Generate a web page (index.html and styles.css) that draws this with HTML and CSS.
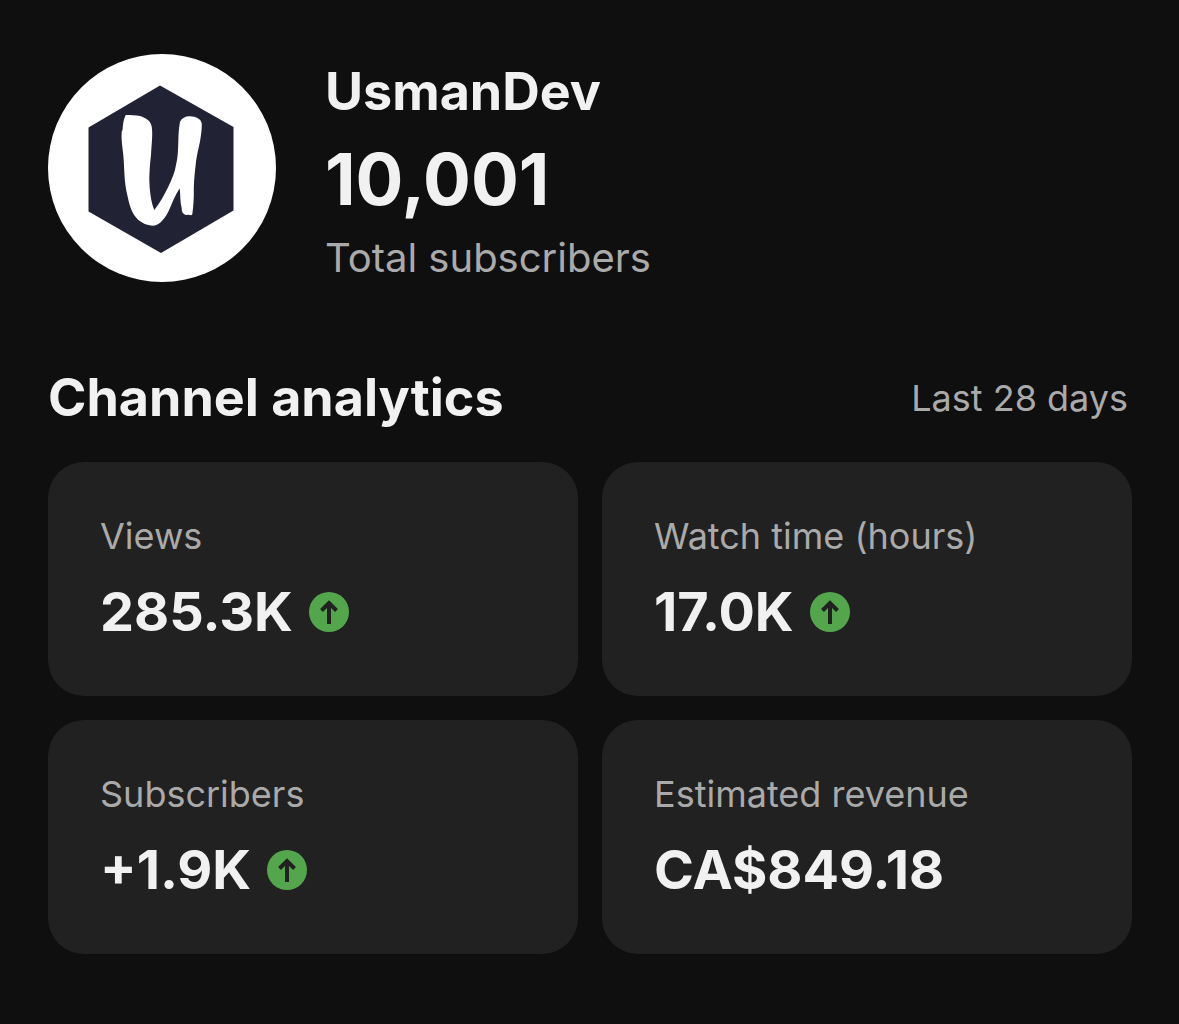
FILE: index.html
```html
<!DOCTYPE html>
<html lang="en">
<head>
<meta charset="UTF-8">
<title>Channel analytics</title>
<meta name="viewport" content="width=device-width, initial-scale=1.0">

<link rel="stylesheet" href="styles.css">
</head>

<body>

<!-- CHANNEL -->
<header class="channel">
  <svg class="avatar" viewBox="0 0 228 228" role="img" aria-label="UsmanDev">
    <circle cx="114" cy="114" r="114" fill="#fff"/>
    <path fill="#212335" d="M112 31.500L185.500 73V156.500L113 199L40.500 157.500V73.500Z"/>
    <path fill="#fff" d="M77.700 61C82 61 88 61 92 62C98 64 103 67 103.700 72.700C105 80 103.500 91 103 101C102 109 101.500 117 101.300 124.300C101.500 137 103 148 106.300 156C112 149 116 141 120.300 132.700C124 125 127 118 128 111C130 103 130 96 130.300 87.700C130.500 80 131 73 132 67.700C134 64 138 62 142 62.300C148 62.500 153 65 153.700 69.300C154 73 153.500 77 153 81C152 90 149 99 148 107.700C147 117 146 125 145.800 134.300C146 143 145.500 152 144.300 160.300C143 162.500 141.500 160 138.700 161C135 160.500 133.500 158 133.700 154.300C132 148 132.500 141 131.700 134.300C127 141 124 150 120.300 157.700C117 164 112 171 105.300 171.700C99 171.500 93 169 88.700 164.300C83 158 81 149 79.300 141C76 128 76.500 114 75.300 101C74.500 93 73 85 73.700 77.700L74.500 76C75 70 75.500 65 77.700 61Z"/>
  </svg>
  <div class="channel-info">
    <h1 class="name">UsmanDev</h1>
    <div class="count">10,001</div>
    <div class="count-label">Total subscribers</div>
  </div>
</header>

<!-- ANALYTICS -->
<main>
  <div class="section-head">
    <h2>Channel analytics</h2>
    <span class="small">Last 28 days</span>
  </div>

  <div class="cards">
    <div class="card">
      <div class="small">Views</div>
      <div class="value">285.3K
        <svg class="up" viewBox="0 0 40 40" role="img" aria-label="Up"><circle cx="20" cy="20" r="20"/><path d="M20 32V10M12.500 18.500L20 11L27.500 18.500"/></svg>
      </div>
    </div>
    <div class="card">
      <div class="small">Watch time (hours)</div>
      <div class="value">17.0K
        <svg class="up" viewBox="0 0 40 40" role="img" aria-label="Up"><circle cx="20" cy="20" r="20"/><path d="M20 32V10M12.500 18.500L20 11L27.500 18.500"/></svg>
      </div>
    </div>
    <div class="card">
      <div class="small">Subscribers</div>
      <div class="value">+1.9K
        <svg class="up" viewBox="0 0 40 40" role="img" aria-label="Up"><circle cx="20" cy="20" r="20"/><path d="M20 32V10M12.500 18.500L20 11L27.500 18.500"/></svg>
      </div>
    </div>
    <div class="card">
      <div class="small">Estimated revenue</div>
      <div class="value">CA$849.18</div>
    </div>
  </div>
</main>

</body>
</html>
```

FILE: styles.css
```css
*{box-sizing:border-box}
body{
  margin:0; padding:54px 47px 54px 48px;
  background:#0f0f0f; color:#f1f1f1;
  font-family:Inter,"Liberation Sans",sans-serif;
}
h1,h2{margin:0; font-weight:700}

/* CHANNEL */
.channel{display:flex; align-items:flex-start; gap:49px}
.avatar{width:228px; height:228px; flex:none}
.channel-info{padding-top:6px}
.name{font-size:52px; line-height:64px}
.count{font-size:71px; line-height:110px; font-weight:700}
.count-label{font-size:40px; line-height:48px; color:#aaa}

/* ANALYTICS */
.section-head{
  display:flex; justify-content:space-between; align-items:center;
  margin-top:84px; padding-right:4px;
}
.section-head h2{font-size:52px; line-height:64px}
.small{font-size:36px; line-height:44px; color:#aaa}

.cards{
  display:grid; grid-template-columns:1fr 1fr; gap:24px;
  margin-top:32px;
}
.card{
  min-height:234px; padding:52px;
  background:#212121; border-radius:36px;
}
.value{
  display:flex; align-items:center; gap:16px;
  margin-top:22px;
  font-size:54px; line-height:64px; font-weight:700;
}
.up{width:40px; height:40px}
.up circle{fill:#54a64d}
.up path{fill:none; stroke:#212121; stroke-width:4}
```
